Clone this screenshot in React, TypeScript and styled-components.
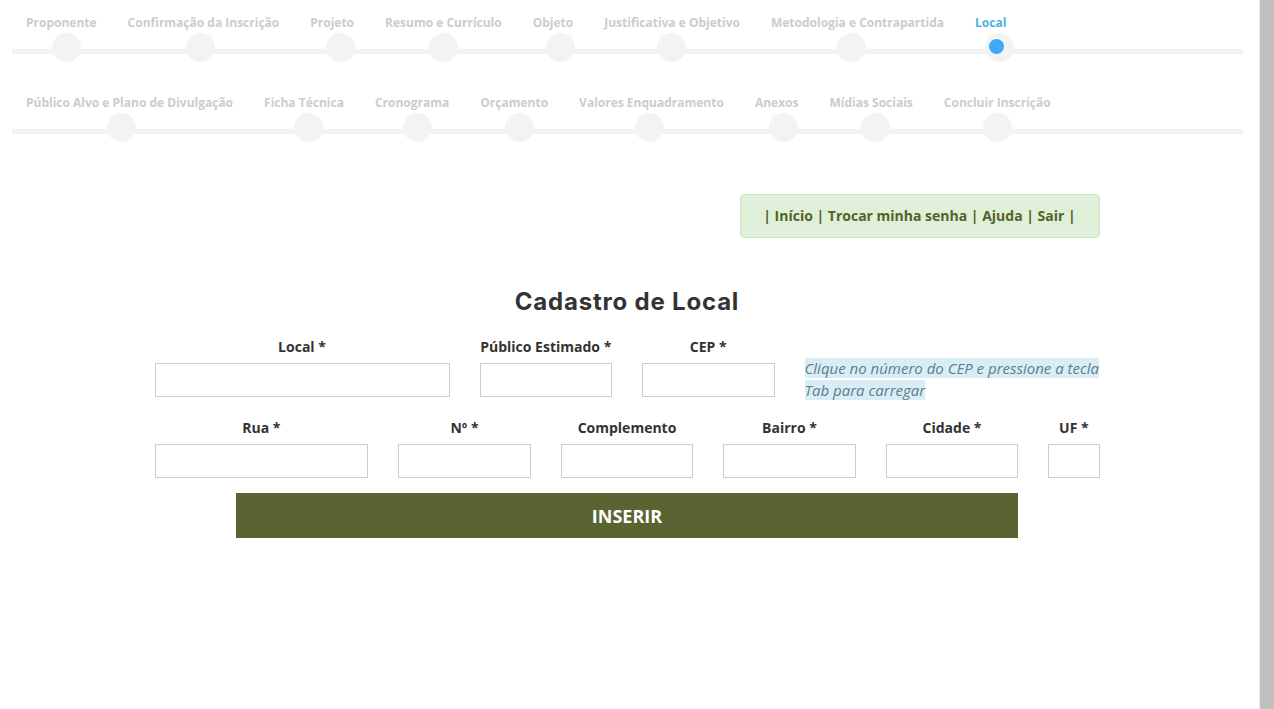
import React from "react";
import styled, { createGlobalStyle } from "styled-components";

const GlobalStyle = createGlobalStyle`
  html, body {
    margin: 0;
    padding: 0;
    background: #fff;
    font-family: "Open Sans", "Noto Sans", sans-serif;
    color: #333;
  }
  body {
    overflow: hidden;
  }
`;

// shift = how far the bullet sits from the label centre
type Step = { label: string; shift: number; active?: boolean };

const stepsTop: Step[] = [
  { label: "Proponente", shift: 5 },
  { label: "Confirmação da Inscrição", shift: -3 },
  { label: "Projeto", shift: 8 },
  { label: "Resumo e Currículo", shift: 0 },
  { label: "Objeto", shift: 8 },
  { label: "Justificativa e Objetivo", shift: -1 },
  { label: "Metodologia e Contrapartida", shift: -6 },
  { label: "Local", shift: 9, active: true },
];

const stepsBottom: Step[] = [
  { label: "Público Alvo e Plano de Divulgação", shift: -8 },
  { label: "Ficha Técnica", shift: 5 },
  { label: "Cronograma", shift: 5 },
  { label: "Orçamento", shift: 5 },
  { label: "Valores Enquadramento", shift: -2 },
  { label: "Anexos", shift: 7 },
  { label: "Mídias Sociais", shift: 4 },
  { label: "Concluir Inscrição", shift: 0 },
];

const fieldsTop = [
  { label: "Local *", span: 4 },
  { label: "Público Estimado *", span: 2 },
  { label: "CEP *", span: 2 },
];

const fieldsBottom = [
  { label: "Rua *", span: 3 },
  { label: "Nº *", span: 2 },
  { label: "Complemento", span: 2 },
  { label: "Bairro *", span: 2 },
  { label: "Cidade *", span: 2 },
  { label: "UF *", span: 1 },
];

const App = () => {
  const renderSteps = (steps: Step[]) =>
    steps.map((step) => (
      <StepItem key={step.label}>
        <StepLabel $active={step.active}>{step.label}</StepLabel>
        <StepCircle $shift={step.shift}>{step.active && <ActiveDot />}</StepCircle>
      </StepItem>
    ));

  return (
    <>
      <GlobalStyle />
      <Page>
        <Main>
          <StepRow>{renderSteps(stepsTop)}</StepRow>
          <StepRow>{renderSteps(stepsBottom)}</StepRow>

          <Container>
            <MenuBar>
              <MenuBox>| Início | Trocar minha senha | Ajuda | Sair |</MenuBox>
            </MenuBar>

            <Title>Cadastro de Local</Title>

            <FormGrid>
              {fieldsTop.map((f) => (
                <Field key={f.label} $span={f.span}>
                  <Label>{f.label}</Label>
                  <Input type="text" />
                </Field>
              ))}
              <Hint $span={4}>
                <span>Clique no número do CEP e pressione a tecla Tab para carregar</span>
              </Hint>
            </FormGrid>

            <FormGrid>
              {fieldsBottom.map((f) => (
                <Field key={f.label} $span={f.span}>
                  <Label>{f.label}</Label>
                  <Input type="text" />
                </Field>
              ))}
            </FormGrid>

            <FormGrid>
              <SubmitButton>INSERIR</SubmitButton>
            </FormGrid>
          </Container>
        </Main>
        <Scrollbar />
      </Page>
    </>
  );
};

const Page = styled.div`
  display: flex;
  height: 709px;
`;

const Main = styled.div`
  flex: 1;
  padding-right: 5px;
`;

const Scrollbar = styled.div`
  width: 14px;
  border-left: 1px solid #ececec;
  background: #c1c1c1;
`;

const StepRow = styled.ul`
  display: flex;
  margin: 0;
  padding: 15px 0 0 10.5px;
  height: 65px;
  list-style: none;
  background-image: linear-gradient(#f3f3f3, #f3f3f3);
  background-repeat: no-repeat;
  background-size: 1231px 5px;
  background-position: 12px 49px;
`;

const StepItem = styled.li`
  display: flex;
  flex-direction: column;
  align-items: center;
  padding: 0 15.5px;
`;

const StepLabel = styled.span<{ $active?: boolean }>`
  font-size: 12px;
  font-weight: 700;
  line-height: 16px;
  white-space: nowrap;
  color: ${(p) => (p.$active ? "#4db0e3" : "#cccccc")};
`;

const StepCircle = styled.div<{ $shift: number }>`
  margin-top: 2px;
  width: 29px;
  height: 29px;
  border-radius: 50%;
  background: #f3f3f3;
  display: flex;
  align-items: center;
  justify-content: center;
  transform: translateX(${(p) => p.$shift}px);
`;

const ActiveDot = styled.div`
  width: 15px;
  height: 15px;
  border-radius: 50%;
  background: #3fa9f5;
  margin: -3px 0 0 -6px;
`;

const Container = styled.div`
  width: 945px;
  margin: 0 auto;
`;

const MenuBar = styled.div`
  display: flex;
  justify-content: flex-end;
  margin-top: 34px;
`;

const MenuBox = styled.div`
  width: 360px;
  box-sizing: border-box;
  padding: 11px 0;
  text-align: center;
  background: #dff0d8;
  border: 1px solid #d0e4c4;
  border-radius: 4px;
  font-size: 14px;
  font-weight: 700;
  line-height: 20px;
  color: #56602c;
`;

const Title = styled.h2`
  margin: 47px 0 18px;
  text-align: center;
  font-family: Inter, "Noto Sans", sans-serif;
  font-size: 24px;
  font-weight: 700;
  line-height: 34px;
  letter-spacing: 0.8px;
  color: #333;
`;

const FormGrid = styled.div`
  display: grid;
  grid-template-columns: repeat(12, minmax(0, 1fr));
  column-gap: 30px;
  margin-bottom: 21px;
`;

const Field = styled.div<{ $span: number }>`
  grid-column: span ${(p) => p.$span};
  display: flex;
  flex-direction: column;
  min-width: 0;
`;

const Label = styled.label`
  text-align: center;
  font-size: 14px;
  font-weight: 700;
  line-height: 20px;
  margin-bottom: 6px;
  white-space: nowrap;
  color: #333;
`;

const Input = styled.input`
  width: 100%;
  min-width: 0;
  height: 34px;
  box-sizing: border-box;
  border: 1px solid #cccccc;
  border-radius: 0;
  padding: 6px 12px;
  font-family: inherit;
  font-size: 14px;
  background: #fff;
`;

const Hint = styled.div<{ $span: number }>`
  grid-column: span ${(p) => p.$span};
  height: 60px;
  box-sizing: border-box;
  padding-top: 20px;
  font-size: 15px;
  font-style: italic;
  line-height: 22px;
  color: #5e7c8b;

  span {
    background: #d9edf7;
  }
`;

const SubmitButton = styled.button`
  grid-column: 2 / span 10;
  height: 45px;
  margin-top: -6px;
  border: none;
  border-radius: 0;
  background: #5a6332;
  color: #fff;
  font-family: "Open Sans", sans-serif;
  font-size: 18px;
  font-weight: 700;
  cursor: pointer;
`;

export default App;
